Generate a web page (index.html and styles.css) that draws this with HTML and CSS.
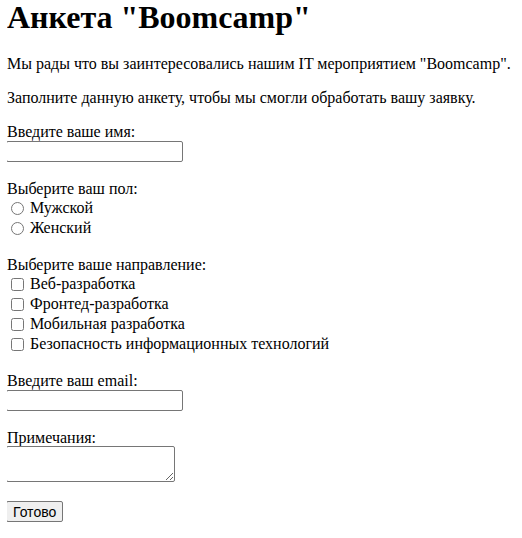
FILE: index.html
```html
<!DOCTYPE html>
<html lang="ru">
<head>
<meta charset="utf-8">
<title>Анкета</title>
<link rel="stylesheet" href="styles.css">
</head>
<body>
<h1 class="title">Анкета "Boomcamp"</h1>
<p class="text">Мы рады что вы заинтересовались нашим IT мероприятием "Boomcamp".</p>
<p class="text">Заполните данную анкету, чтобы мы смогли обработать вашу заявку.</p>
<form class="form">
  <div class="group">
    <label class="label" for="name">Введите ваше имя:</label>
    <input class="field" type="text" id="name">
  </div>
  <div class="group">
    <div class="label">Выберите ваш пол:</div>
    <label class="option"><input class="radio" type="radio" name="sex">Мужской</label>
    <label class="option"><input class="radio" type="radio" name="sex">Женский</label>
  </div>
  <div class="group">
    <div class="label">Выберите ваше направление:</div>
    <label class="option"><input class="check" type="checkbox">Веб-разработка</label>
    <label class="option"><input class="check" type="checkbox">Фронтед-разработка</label>
    <label class="option"><input class="check" type="checkbox">Мобильная разработка</label>
    <label class="option"><input class="check" type="checkbox">Безопасность информационных технологий</label>
  </div>
  <div class="group">
    <label class="label" for="email">Введите ваш email:</label>
    <input class="field" type="email" id="email">
  </div>
  <div class="group">
    <label class="label" for="notes">Примечания:</label>
    <textarea class="area" id="notes"></textarea>
  </div>
  <div class="group">
    <button class="submit" type="submit">Готово</button>
  </div>
</form>
</body>
</html>
```
FILE: styles.css
```css
body {
  margin: 0 7px;
  font-family: "Liberation Serif", "Times New Roman", serif;
  font-size: 16px;
  color: #000;
  background: #fff;
}
.title {
  font-size: 32px;
  font-weight: bold;
  margin: 0 0 21px;
  line-height: 34px;
}
.text {
  margin: 0 0 16px;
  line-height: 18px;
}
.form {
  display: flex;
  flex-direction: column;
}
.group {
  display: flex;
  flex-direction: column;
  align-items: flex-start;
  margin-bottom: 18px;
}
.label {
  display: block;
  line-height: 18px;
}
.option {
  display: flex;
  align-items: center;
  line-height: 18px;
  height: 20px;
}
.radio, .check {
  margin: 0 6px 0 4px;
  width: 13px;
  height: 13px;
}
.field {
  width: 177px;
  height: 21px;
  box-sizing: border-box;
  margin: 0 0 0 -1px;
  border: 1px solid #767676;
  border-radius: 2px;
  font-family: "Liberation Sans", Arial, sans-serif;
}
.area {
  width: 169px;
  height: 36px;
  box-sizing: border-box;
  margin: -1px 0 0 -1px;
  border: 1px solid #767676;
  border-radius: 2px;
}
.submit {
  font-family: "Liberation Sans", Arial, sans-serif;
  font-size: 14px;
  padding: 1px 6px;
  height: 21px;
  border: 1px solid #767676;
  border-radius: 2px;
  background: #efefef;
  margin: 1px 0 0 -1px;
}
```
